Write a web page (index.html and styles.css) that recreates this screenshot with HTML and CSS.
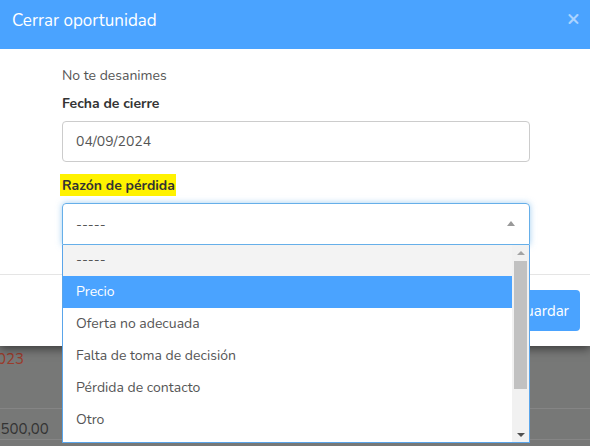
FILE: index.html
```html
<!DOCTYPE html>
<html lang="es">
<head>
  <meta charset="UTF-8">
  <meta name="viewport" content="width=device-width, initial-scale=1.0">
  <title>Cerrar oportunidad</title>
  <link rel="stylesheet" href="styles.css">
</head>
<body>
  <div class="modal">
    <div class="modal-header">
      <h4 class="modal-title">Cerrar oportunidad</h4>
      <span class="close">&times;</span>
    </div>
    <div class="modal-body">
      <p class="hint">No te desanimes</p>
      <div class="field">
        <label class="label">Fecha de cierre</label>
        <div class="input">04/09/2024</div>
      </div>
      <div class="field">
        <label class="label"><mark class="marker">Razón de pérdida</mark></label>
        <div class="select-wrap">
          <div class="select">
            <span>-----</span>
            <span class="caret"></span>
          </div>
          <div class="dropdown">
            <ul class="options">
              <li class="opt hover">-----</li>
              <li class="opt selected">Precio</li>
              <li class="opt">Oferta no adecuada</li>
              <li class="opt">Falta de toma de decisión</li>
              <li class="opt">Pérdida de contacto</li>
              <li class="opt">Otro</li>
            </ul>
            <div class="scrollbar">
              <span class="arrow up"></span>
              <span class="thumb"></span>
              <span class="arrow down"></span>
            </div>
          </div>
        </div>
      </div>
    </div>
    <div class="modal-footer">
      <button class="btn">Guardar</button>
    </div>
  </div>

  <div class="page">
    <div class="row date">2023</div>
    <div class="row amount">2.500,00</div>
  </div>
</body>
</html>
```

FILE: styles.css
```css
html,
body {
  height: 446px;
  overflow: hidden;
}
body {
  margin: 0;
  background: #777877;
  font-family: "Nunito", "Lato", "Open Sans", sans-serif;
  color: #555;
}
.modal {
  background: #fff;
  box-shadow: 0 3px 9px rgba(0, 0, 0, 0.5);
  position: relative;
  z-index: 2;
}
.modal-header {
  background: #4aa3ff;
  height: 49px;
  display: flex;
  align-items: center;
  justify-content: space-between;
  padding: 0 10px 0 12px;
  box-sizing: border-box;
}
.modal-title {
  margin: 0;
  color: #fff;
  font-size: 17px;
  font-weight: 400;
  margin-top: -8px;
}
.close {
  color: rgba(255, 255, 255, 0.55);
  font-size: 22px;
  font-weight: 700;
  margin-top: -14px;
}
.modal-body {
  padding: 17px 60px 29px 62px;
  border-bottom: 1px solid #e5e5e5;
}
.hint {
  margin: 0 0 8px;
  font-size: 14px;
  line-height: 20px;
}
.field {
  margin-bottom: 14px;
}
.field:last-child {
  margin-bottom: 0;
}
.label {
  display: block;
  font-size: 14px;
  font-weight: 700;
  color: #333;
  line-height: 20px;
  margin-bottom: 7px;
}
.marker {
  background: #fff200;
  color: #333;
  padding: 2px 1px 1px 2px;
  margin-left: -2px;
}
.input,
.select {
  height: 41px;
  box-sizing: border-box;
  border: 1px solid #ccc;
  border-radius: 4px;
  padding: 0 13px;
  display: flex;
  align-items: center;
  font-size: 14px;
  color: #555;
}
.select-wrap {
  position: relative;
}
.select {
  height: 42px;
  border-color: #66afe9;
  box-shadow: 0 0 6px rgba(102, 175, 233, 0.6);
  justify-content: space-between;
  border-radius: 4px 4px 0 0;
}
.caret {
  width: 0;
  height: 0;
  border-left: 4px solid transparent;
  border-right: 4px solid transparent;
  border-bottom: 5px solid #999;
  margin-right: 1px;
  margin-top: -2px;
}
.dropdown {
  position: absolute;
  left: 0;
  right: 0;
  top: 42px;
  height: 197px;
  background: #fff;
  border: 1px solid #5aa5ea;
  border-top: none;
  display: flex;
  overflow: hidden;
}
.options {
  list-style: none;
  margin: 0;
  padding: 0;
  flex: 1;
}
.opt {
  height: 32px;
  line-height: 32px;
  padding-left: 13px;
  font-size: 14px;
  color: #555;
}
.opt.hover {
  background: #f3f3f3;
  height: 31px;
  line-height: 30px;
}
.opt.selected {
  background: #4aa3ff;
  color: #fff;
}
.scrollbar {
  width: 17px;
  background: #f1f1f1;
  display: flex;
  flex-direction: column;
  align-items: center;
}
.arrow {
  width: 0;
  height: 0;
  border-left: 4px solid transparent;
  border-right: 4px solid transparent;
}
.arrow.up {
  border-bottom: 4px solid #a3a3a3;
  margin: 6px 0 6px;
}
.arrow.down {
  border-top: 4px solid #505050;
  margin: auto 0 5px;
}
.thumb {
  width: 13px;
  height: 128px;
  background: #c1c1c1;
}
.modal-footer {
  padding: 15px 10px 15px;
  display: flex;
  justify-content: flex-end;
}
.btn {
  background: #4aa3ff;
  color: #fff;
  border: none;
  border-radius: 4px;
  font-family: inherit;
  font-size: 15px;
  height: 41px;
  padding: 0 11px;
}
.page {
  font-size: 15px;
}
.row {
  box-sizing: border-box;
  border-bottom: 1px solid #858585;
  margin-left: -12px;
}
.date {
  color: #9b3a2a;
  height: 63px;
  padding-top: 3px;
}
.amount {
  color: #333;
  padding-top: 10px;
}
```
